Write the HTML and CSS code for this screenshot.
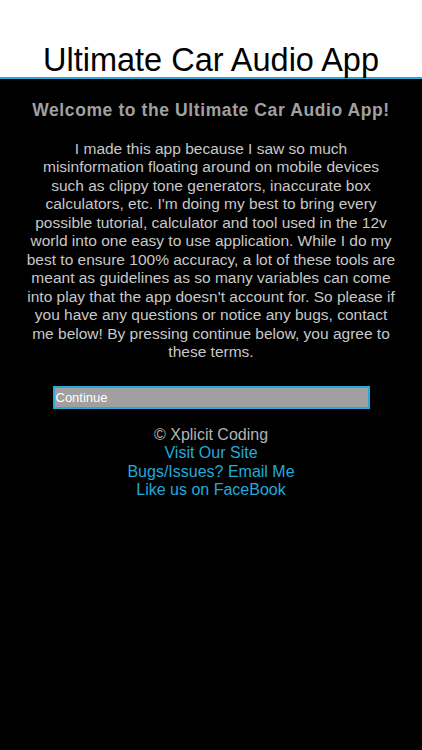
FILE: index.html
```html
<!DOCTYPE html>
<html>
<head>
<meta charset="utf-8">
<link rel="stylesheet" href="styles.css">
</head>
<body>
<header class="topbar">
  <h1 class="title">Ultimate Car Audio App</h1>
</header>
<main class="content">
  <h2 class="welcome">Welcome to the Ultimate Car Audio App!</h2>
  <p class="intro">I made this app because I saw so much misinformation floating around on mobile devices such as clippy tone generators, inaccurate box calculators, etc. I'm doing my best to bring every possible tutorial, calculator and tool used in the 12v world into one easy to use application. While I do my best to ensure 100% accuracy, a lot of these tools are meant as guidelines as so many variables can come into play that the app doesn't account for. So please if you have any questions or notice any bugs, contact me below! By pressing continue below, you agree to these terms.</p>
  <div class="btn-row"><button class="continue">Continue</button></div>
  <div class="footer">
    <div class="copy">© Xplicit Coding</div>
    <a class="link">Visit Our Site</a>
    <a class="link">Bugs/Issues? Email Me</a>
    <a class="link">Like us on FaceBook</a>
  </div>
</main>
</body>
</html>
```
FILE: styles.css
```css
html, body {
  margin: 0;
  padding: 0;
  background: #000;
  height: 100%;
}
body {
  font-family: "Liberation Sans", Arial, sans-serif;
}
.topbar {
  background: #fff;
  height: 77px;
  border-bottom: 2px solid #29a9d9;
  display: flex;
  align-items: flex-end;
  justify-content: center;
}
.title {
  margin: 0;
  font-weight: normal;
  font-size: 32.5px;
  line-height: 34px;
  color: #000;
}
.content {
  display: flex;
  flex-direction: column;
  align-items: center;
  padding: 0 26px;
}
.welcome {
  margin: 20px 0 0 0;
  font-size: 17.5px;
  line-height: 22px;
  font-weight: bold;
  color: #a0a0a0;
  letter-spacing: 0.6px;
  white-space: nowrap;
}
.intro {
  margin: 19px 0 0 0;
  font-size: 15.5px;
  line-height: 18.45px;
  color: #c8c8c8;
  text-align: center;
}
.btn-row {
  margin-top: 25px;
  width: 100%;
  display: flex;
  justify-content: center;
}
.continue {
  width: 317px;
  height: 23px;
  flex: none;
  background: #a0a0a0;
  border: 2px solid #29a9d9;
  color: #fff;
  font-family: "Liberation Sans", Arial, sans-serif;
  font-size: 13px;
  text-align: left;
  padding: 0 0 0 1px;
  margin: 0;
}
.footer {
  margin-top: 16.5px;
  display: flex;
  flex-direction: column;
  align-items: center;
  font-size: 16px;
  line-height: 18.5px;
}
.copy {
  color: #b4b4b4;
}
.link {
  color: #20aadb;
}
```
